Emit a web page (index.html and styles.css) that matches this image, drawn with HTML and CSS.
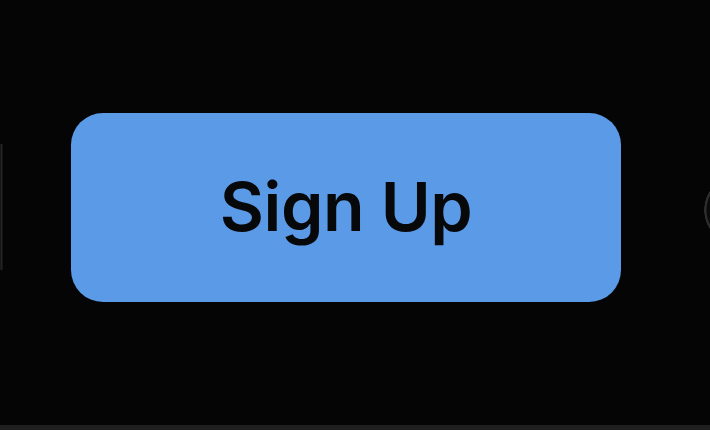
FILE: index.html
```html
<!DOCTYPE html>
<html>
<head>
<meta charset="utf-8">
<link rel="stylesheet" href="styles.css">
</head>
<body>
<div class="stage">
  <div class="edge-left"></div>
  <button class="signup">Sign Up</button>
  <div class="edge-right"></div>
</div>
<div class="bottom-bar"></div>
</body>
</html>
```
FILE: styles.css
```css
html, body {
  margin: 0;
  padding: 0;
  background: #050505;
  width: 710px;
  height: 430px;
  overflow: hidden;
}
.stage {
  position: relative;
  height: 425px;
  padding-top: 113px;
  padding-left: 71px;
  box-sizing: border-box;
  overflow: hidden;
}
.signup {
  display: flex;
  align-items: center;
  justify-content: center;
  width: 550px;
  height: 189px;
  border: none;
  border-radius: 32px;
  background: #5b9ae6;
  color: #07080a;
  font-family: Inter, "Noto Sans", sans-serif;
  font-weight: 600;
  font-size: 68px;
  letter-spacing: -0.5px;
  padding: 0 0 4px 0;
  margin: 0;
}
.edge-left {
  position: absolute;
  left: 0;
  top: 144px;
  width: 3px;
  height: 126px;
  background: linear-gradient(to right, #0a0a0a 0, #242424 1px, #242424 2px, #050505 3px);
}
.edge-right {
  position: absolute;
  left: 704px;
  top: 175px;
  width: 6px;
  height: 70px;
  background: radial-gradient(circle 35px at 35px 35px, #0b0b0b 32px, #2e2e2e 33px, #2e2e2e 34.5px, transparent 35px);
}
.bottom-bar {
  height: 5px;
  background: #1f1f1f;
}
```
